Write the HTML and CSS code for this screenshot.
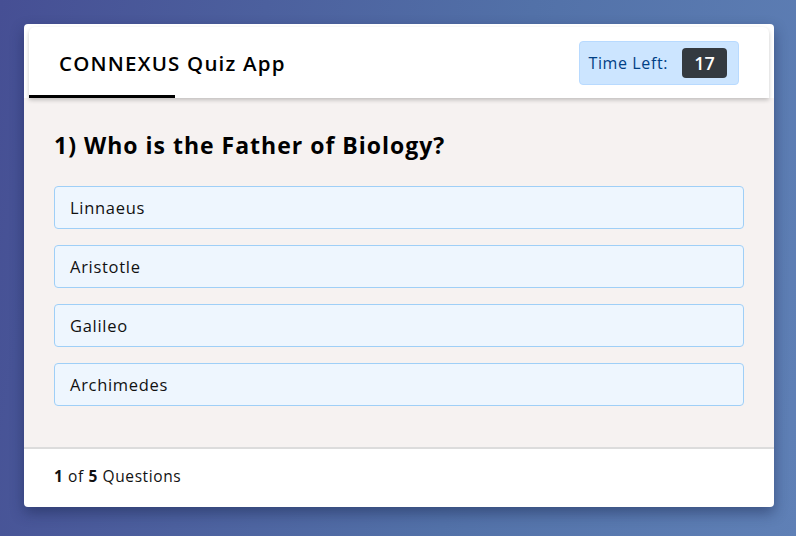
FILE: index.html
```html
<!DOCTYPE html>
<html>
<head>
<meta charset="utf-8">
<link rel="stylesheet" href="styles.css">
</head>
<body>
<div class="card">
  <header class="header">
    <h1 class="title">CONNEXUS Quiz App</h1>
    <div class="timer">Time Left: <span class="badge">17</span></div>
    <div class="underline"></div>
  </header>
  <main class="body">
    <h2 class="question">1) Who is the Father of Biology?</h2>
    <div class="options">
      <div class="option">Linnaeus</div>
      <div class="option">Aristotle</div>
      <div class="option">Galileo</div>
      <div class="option">Archimedes</div>
    </div>
  </main>
  <footer class="footer"><span><b>1</b> of <b>5</b> Questions</span></footer>
</div>
</body>
</html>
```
FILE: styles.css
```css
html, body { margin: 0; height: 100%; }
body {
  font-family: "Open Sans", sans-serif;
  background: linear-gradient(100deg, #464f94 0%, #5271a8 60%, #5f80b6 100%);
  padding: 24px 22px 0 24px;
  box-sizing: border-box;
  color: #111;
}
.card {
  width: 750px;
  height: 483px;
  background: #fff;
  border-radius: 4px;
  box-shadow: 0 6px 14px rgba(20, 30, 70, 0.45);
  display: flex;
  flex-direction: column;
  overflow: hidden;
}
.header {
  position: relative;
  margin: 3px 5px 0 5px;
  height: 71px;
  background: #fff;
  border-radius: 6px 6px 0 0;
  box-shadow: 0 2px 4px rgba(0,0,0,0.22);
  display: flex;
  align-items: center;
  justify-content: space-between;
  padding: 0 30px;
  z-index: 1;
}
.title {
  margin: 0;
  font-size: 20.5px;
  font-weight: 600;
  letter-spacing: 1.2px;
  color: #000;
}
.underline {
  position: absolute;
  left: 0;
  bottom: 0;
  width: 146px;
  height: 3px;
  background: #000;
}
.timer {
  display: flex;
  align-items: center;
  gap: 14px;
  height: 42px;
  padding: 0 11px 0 9px;
  background: #cce5ff;
  border: 1px solid #b8daff;
  border-radius: 4px;
  color: #004085;
  font-size: 16px;
  letter-spacing: 0.6px;
}
.badge {
  background: #343a40;
  color: #fff;
  font-size: 18px;
  font-weight: 600;
  letter-spacing: 0;
  border-radius: 4px;
  width: 45px;
  height: 30px;
  display: flex;
  align-items: center;
  justify-content: center;
}
.body {
  flex: 1;
  background: #f6f2f1;
  padding: 30px 30px 0 30px;
  border-bottom: 2px solid #dcdcdc;
}
.question {
  margin: 0 0 24px 0;
  font-size: 23px;
  font-weight: 700;
  letter-spacing: 1px;
  color: #000;
  line-height: 34px;
}
.options {
  display: flex;
  flex-direction: column;
  gap: 16px;
}
.option {
  height: 41px;
  background: #eef6fe;
  border: 1px solid #9fcff7;
  border-radius: 4px;
  padding: 0 15px;
  display: flex;
  align-items: center;
  font-size: 16.5px;
  letter-spacing: 0.7px;
  color: #111;
}
.footer {
  height: 58px;
  padding: 0 30px 5px 30px;
  box-sizing: border-box;
  display: flex;
  align-items: center;
  font-size: 15.5px;
  letter-spacing: 0.6px;
  color: #111;
}
.footer b { font-weight: 700; }
```
